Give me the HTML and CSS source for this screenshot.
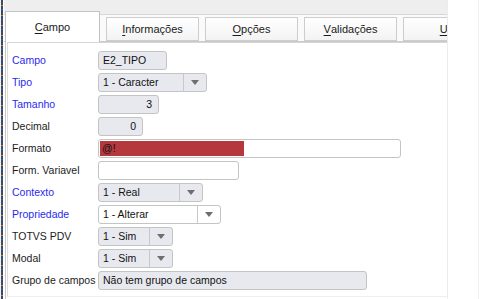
FILE: index.html
```html
<!DOCTYPE html>
<html lang="pt">
<head>
<meta charset="utf-8">
<title>Campo</title>
<link rel="stylesheet" href="styles.css">
</head>
<body>
<div class="window">
  <div class="edge"></div>
  <div class="main">
    <div class="tabs">
      <div class="tab active"><u>C</u>ampo</div>
      <div class="tab"><u>I</u>nformações</div>
      <div class="tab"><u>O</u>pções</div>
      <div class="tab"><u>V</u>alidações</div>
      <div class="tab"><u>U</u>so</div>
    </div>
    <div class="frame">
      <div class="panel">
        <div class="form">
          <div class="lbl blue">Campo</div>
          <div class="row"><div class="box w-campo">E2_TIPO</div></div>

          <div class="lbl blue">Tipo</div>
          <div class="row"><div class="box select w-tipo"><span class="val">1 - Caracter</span><span class="arrow"></span></div></div>

          <div class="lbl blue">Tamanho</div>
          <div class="row"><div class="box num w-tam">3</div></div>

          <div class="lbl">Decimal</div>
          <div class="row"><div class="box num w-dec">0</div></div>

          <div class="lbl">Formato</div>
          <div class="row"><div class="box white w-fmt"><span class="sel">@!</span></div></div>

          <div class="lbl">Form. Variavel</div>
          <div class="row"><div class="box white w-var"></div></div>

          <div class="lbl blue">Contexto</div>
          <div class="row"><div class="box select w-ctx"><span class="val">1 - Real</span><span class="arrow"></span></div></div>

          <div class="lbl blue">Propriedade</div>
          <div class="row"><div class="box select w-prop white"><span class="val">1 - Alterar</span><span class="arrow"></span></div></div>

          <div class="lbl">TOTVS PDV</div>
          <div class="row"><div class="box select w-sim"><span class="val">1 - Sim</span><span class="arrow"></span></div></div>

          <div class="lbl">Modal</div>
          <div class="row"><div class="box select w-sim"><span class="val">1 - Sim</span><span class="arrow"></span></div></div>

          <div class="lbl">Grupo de campos</div>
          <div class="row"><div class="box w-grp">Não tem grupo de campos</div></div>
        </div>
      </div>
    </div>
  </div>
  <div class="side"></div>
</div>
</body>
</html>
```

FILE: styles.css
```css
* { box-sizing: border-box; }
html, body { margin: 0; padding: 0; }
body {
  width: 481px;
  height: 299px;
  overflow: hidden;
  background: #ffffff;
  font-family: "Liberation Sans", Arial, sans-serif;
  font-size: 10.5px;
  color: #1c1c1c;
}
.window {
  display: flex;
  height: 299px;
}
.edge {
  width: 4px;
  flex: none;
  background:
    linear-gradient(to right, #f2f2f2 0 1px, transparent 1px 3px, #ffffff 3px),
    repeating-linear-gradient(to bottom, #3b4866 0 5px, #c08040 5px 6px, #3b4866 6px 9px, #2f5fb0 9px 10px);
}
.main {
  width: 443px;
  flex: none;
  overflow: hidden;
  display: flex;
  flex-direction: column;
}
.tabs {
  height: 42px;
  flex: none;
  display: flex;
  align-items: flex-end;
  gap: 6px;
  padding-left: 1px;
  border-bottom: 1px solid #c9c9c9;
  background: linear-gradient(to bottom, #eeeeee 0 14px, #d6d6d6 14px 15px, #fafafa 15px);
}
.tab {
  flex: none;
  width: 93px;
  height: 24px;
  border: 1px solid #cdcdcd;
  background: linear-gradient(to bottom, #ffffff, #f3f3f3);
  display: flex;
  align-items: center;
  justify-content: center;
  font-size: 11px;
  color: #1a1a1a;
}
.tab u { text-decoration-thickness: 1px; text-underline-offset: 2px; }
.tab.active {
  width: 95px;
  height: 31px;
  margin-bottom: -1px;
  border-color: #c3c3c3;
  border-bottom: none;
  background: #ffffff;
  position: relative;
  z-index: 1;
}
.frame {
  flex: 1;
  border-left: 1px solid #c6c6c6;
  padding-left: 1px;
  margin-left: 1px;
  padding-bottom: 2px;
  background: #ffffff;
}
.panel {
  height: 100%;
  border-left: 1px solid #dddddd;
  border-top: 1px solid #d6d6d6;
  border-bottom: 1px solid #eeeeee;
  padding: 8px 0 0 4px;
}
.form {
  display: grid;
  grid-template-columns: 86px auto;
  grid-auto-rows: 19px;
  row-gap: 3px;
}
.lbl {
  line-height: 19px;
  white-space: nowrap;
  color: #1c1c1c;
}
.lbl.blue { color: #2a2aee; }
.row { display: flex; }
.box {
  height: 19px;
  border: 1px solid #c4c4c4;
  border-radius: 3px;
  background: #e7e9ef;
  line-height: 17px;
  padding: 0 4px;
  white-space: nowrap;
  overflow: hidden;
  color: #111;
}
.box.white { background: #ffffff; }
.box.num { text-align: right; padding-right: 6px; }
.box.select {
  display: flex;
  padding: 0;
}
.box.select .val {
  flex: 1;
  padding-left: 4px;
  border-right: 1px solid #c8c8c8;
}
.box.select .arrow {
  width: 22px;
  flex: none;
  display: flex;
  align-items: center;
  justify-content: center;
}
.box.select .arrow::before {
  content: "";
  width: 0;
  height: 0;
  border-left: 4px solid transparent;
  border-right: 4px solid transparent;
  border-top: 5px solid #6e6e6e;
}
.box .sel {
  display: inline-block;
  width: 144px;
  height: 15px;
  margin: 1px 0 0 -2px;
  padding-left: 2px;
  line-height: 15px;
  background: #b5383d;
  color: #111;
  vertical-align: top;
}
.w-campo { width: 69px; }
.w-tipo { width: 109px; }
.w-tam { width: 61px; }
.w-dec { width: 45px; }
.w-fmt { width: 303px; padding-left: 3px; }
.w-var { width: 141px; }
.w-ctx { width: 105px; }
.w-prop { width: 123px; }
.w-sim { width: 75px; }
.w-grp { width: 269px; }
.side {
  flex: 1;
  border-left: 1px solid #ececec;
  border-right: 1px solid #f0f0f0;
  margin-right: 2px;
  background: #ffffff;
}
```
